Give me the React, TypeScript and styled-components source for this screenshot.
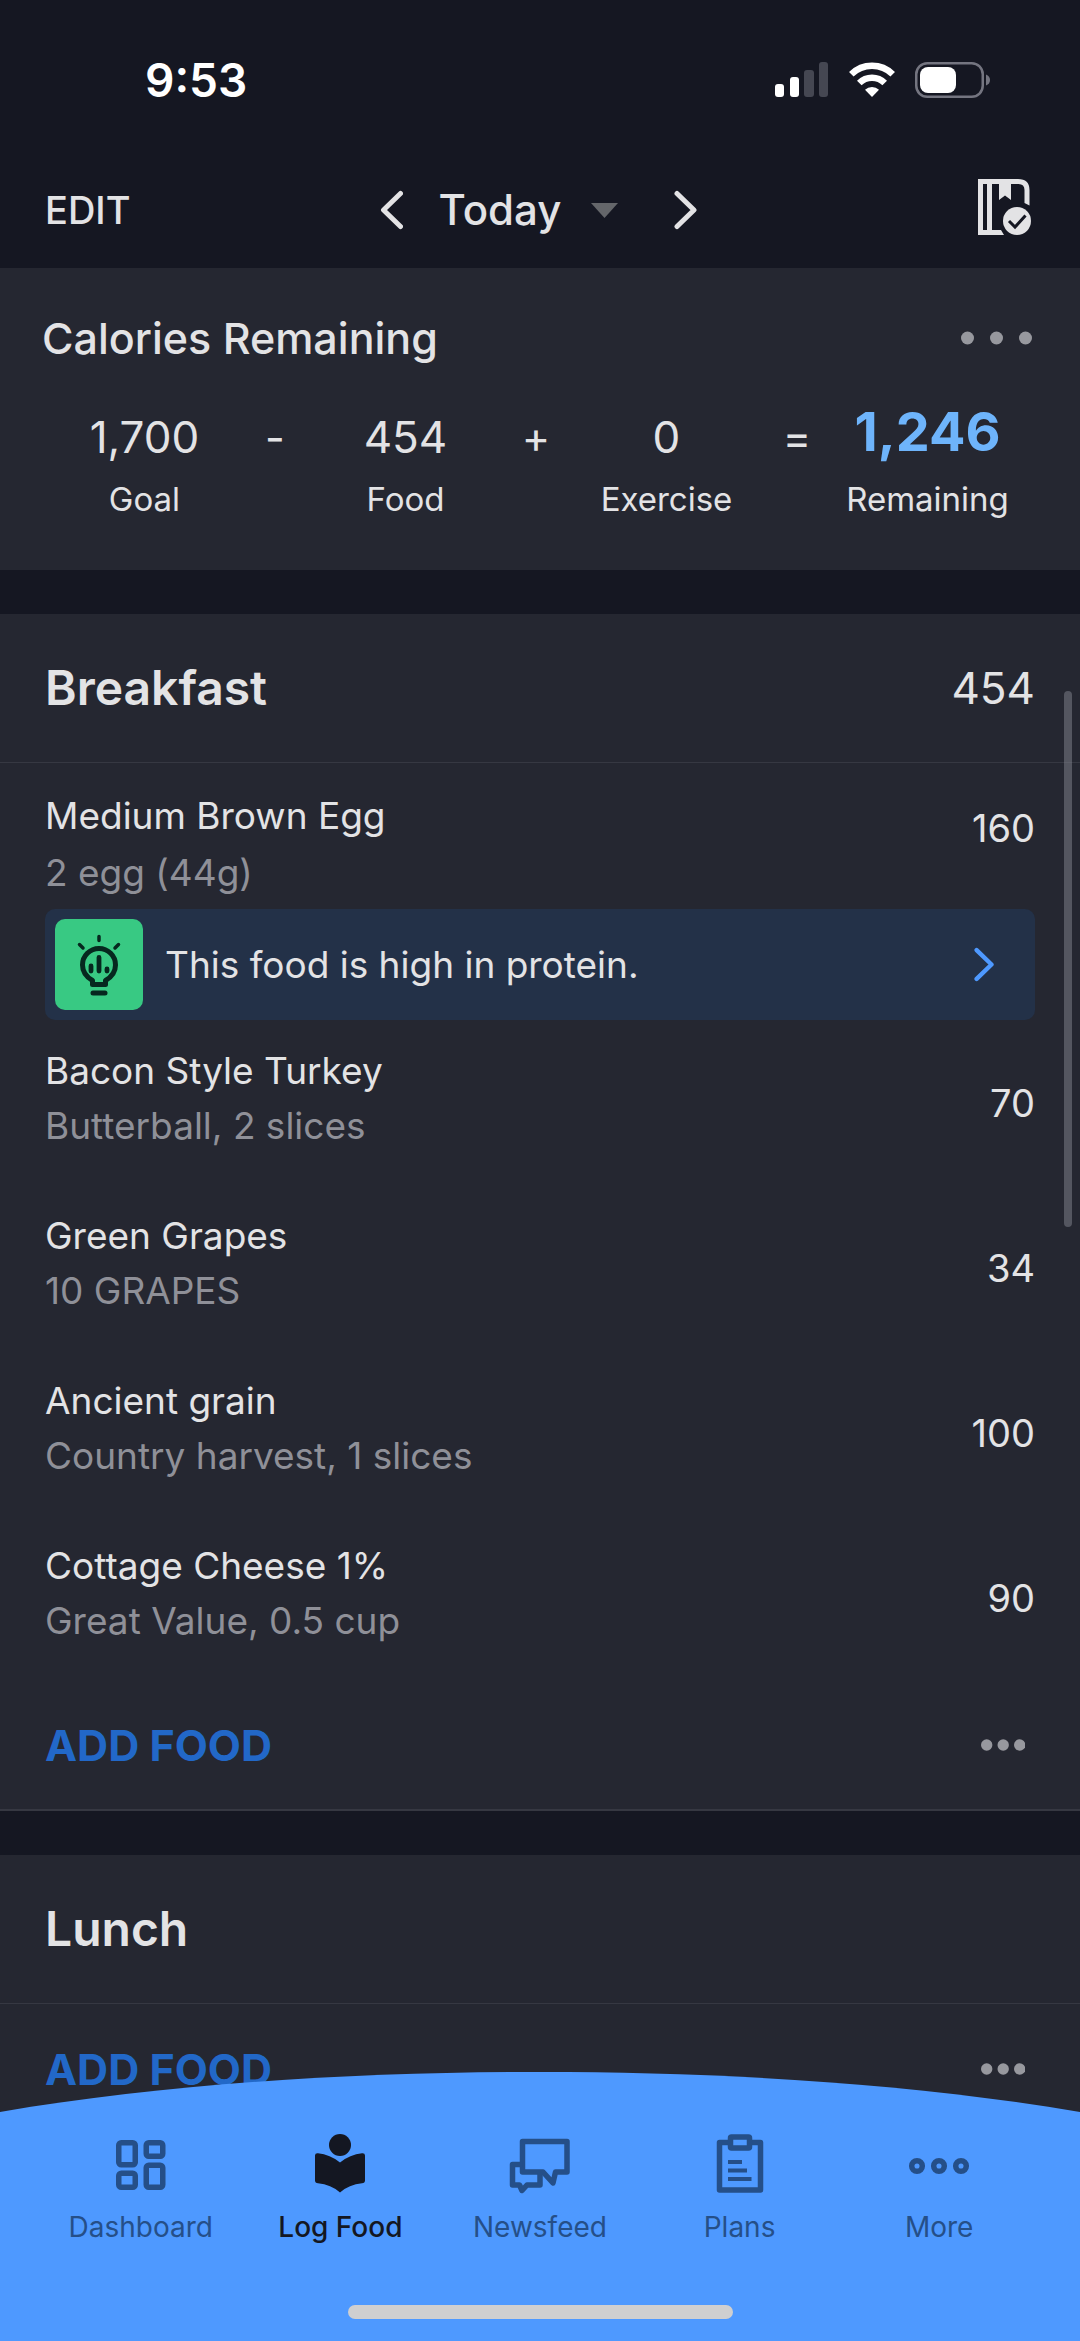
import React from "react";
import styled, { createGlobalStyle } from "styled-components";

const color = {
  page: "#151722",
  panel: "#252731",
  line: "#363842",
  text: "#e3e3e5",
  muted: "#8f9098",
  dots: "#97989e",
  action: "#2268c8",
  highlight: "#6eb4fb",
  nav: "#4e99ff",
  navIdle: "#254f88",
  navActive: "#141722",
  tip: "#233148",
  tipIcon: "#38c983",
};

const GlobalStyle = createGlobalStyle`
  *, *::before, *::after { box-sizing: border-box; }
  html, body { margin: 0; padding: 0; background: ${color.page}; }
  body { font-family: Inter, "Liberation Sans", sans-serif; color: ${color.text}; }
  h1, h2, p, ul, dl, dd, dt { margin: 0; padding: 0; font-weight: inherit; }
  ul { list-style: none; }
  svg { display: block; flex: none; }
`;

const Screen = styled.div`
  position: relative;
  display: flex;
  flex-direction: column;
  height: 100vh;
  overflow: hidden;
`;

const PlainButton = styled.button`
  display: flex;
  align-items: center;
  padding: 0;
  border: 0;
  background: none;
  color: inherit;
  font: inherit;
  cursor: pointer;
`;

const StatusBar = styled.div`
  display: flex;
  align-items: center;
  justify-content: space-between;
  flex: none;
  height: 160px;
  padding: 0 90px 0 145px;
`;

const Clock = styled.time`
  font-size: 46px;
  line-height: 56px;
  font-weight: 600;
  color: #fff;
`;

const StatusIcons = styled.div`
  display: flex;
  align-items: center;
  gap: 20px;
`;

const TopBar = styled.header`
  display: grid;
  grid-template-columns: 1fr auto 1fr;
  align-items: center;
  flex: none;
  height: 108px;
  padding: 0 48px 8px 45px;
`;

const EditButton = styled(PlainButton)`
  justify-self: start;
  font-size: 38px;
  line-height: 48px;
  font-weight: 500;
`;

const DayPicker = styled.div`
  display: flex;
  align-items: center;
  gap: 36px;
`;

const DayButton = styled(PlainButton)`
  gap: 30px;
  padding-right: 20px;
  font-size: 42px;
  line-height: 56px;
  font-weight: 500;
`;

const EndButton = styled(PlainButton)`
  justify-self: end;
  padding-bottom: 6px;
`;

const Diary = styled.main`
  position: relative;
  flex: 1;
  min-height: 0;
  overflow: hidden;
`;

const Summary = styled.section`
  height: 302px;
  padding: 42px 0 0;
  margin-bottom: 44px;
  background: ${color.panel};
`;

const SummaryHead = styled.div`
  display: flex;
  align-items: center;
  justify-content: space-between;
  height: 56px;
  padding: 0 48px 0 42px;
`;

const SummaryTitle = styled.h1`
  font-size: 43px;
  line-height: 56px;
  font-weight: 500;
`;

const Equation = styled.dl`
  display: grid;
  grid-template-columns: 1fr 56px 1fr 56px 1fr 56px 1fr;
  padding: 43px 50px 0 42px;
`;

const Term = styled.div`
  display: flex;
  flex-direction: column-reverse;
  align-items: center;
  gap: 10px;
`;

const TermLabel = styled.dt`
  font-size: 33px;
  line-height: 48px;
`;

const TermValue = styled.dd<{ $strong?: boolean }>`
  height: 56px;
  font-size: ${(p) => (p.$strong ? 54 : 44)}px;
  line-height: ${(p) => (p.$strong ? 46 : 56)}px;
  font-weight: ${(p) => (p.$strong ? 700 : 400)};
  color: ${(p) => (p.$strong ? color.highlight : color.text)};
`;

const Operator = styled.div`
  font-size: 43px;
  line-height: 56px;
  text-align: center;
`;

const Meal = styled.section`
  margin-bottom: 44px;
  background: ${color.panel};
  border-bottom: 2px solid ${color.line};
`;

const MealHead = styled.div`
  display: flex;
  align-items: center;
  justify-content: space-between;
  height: 149px;
  padding: 0 45px;
  border-bottom: 1px solid ${color.line};
`;

const MealName = styled.h2`
  font-size: 48px;
  line-height: 56px;
  font-weight: 600;
`;

const MealTotal = styled.span`
  font-size: 44px;
  line-height: 56px;
`;

const FoodItem = styled.li`
  display: flex;
  flex-direction: column;
  padding: 0 45px;
`;

const FoodLine = styled(PlainButton)<{ $withTip?: boolean }>`
  justify-content: space-between;
  width: 100%;
  height: ${(p) => (p.$withTip ? 146 : 165)}px;
  text-align: left;
`;

const FoodText = styled.span<{ $withTip?: boolean }>`
  display: flex;
  flex-direction: column;
  gap: ${(p) => (p.$withTip ? 2 : 0)}px;
  padding: ${(p) => (p.$withTip ? "16px 0 0" : "0 0 10px")};
`;

const FoodName = styled.span`
  font-size: 37px;
  line-height: 56px;
`;

const FoodDetail = styled.span`
  font-size: 37px;
  line-height: 54px;
  color: ${color.muted};
`;

const FoodCalories = styled.span<{ $withTip?: boolean }>`
  padding-bottom: ${(p) => (p.$withTip ? 16 : 0)}px;
  font-size: 38px;
  line-height: 56px;
`;

const Tip = styled(PlainButton)`
  width: 100%;
  height: 111px;
  padding: 0 40px 0 10px;
  border-radius: 10px;
  background: ${color.tip};
  text-align: left;
`;

const TipIcon = styled.span`
  display: flex;
  align-items: center;
  justify-content: center;
  width: 88px;
  height: 91px;
  border-radius: 10px;
  background: ${color.tipIcon};
`;

const TipText = styled.span`
  flex: 1;
  padding-left: 22px;
  font-size: 37px;
  line-height: 56px;
`;

const MealActions = styled.div`
  display: flex;
  align-items: center;
  justify-content: space-between;
  height: 129px;
  padding: 0 55px 0 45px;
`;

const AddFood = styled(PlainButton)`
  font-size: 43px;
  line-height: 56px;
  font-weight: 700;
  color: ${color.action};
`;

const ScrollThumb = styled.div`
  position: absolute;
  top: 423px;
  right: 8px;
  width: 8px;
  height: 536px;
  border-radius: 4px;
  background: rgba(132, 134, 144, 0.5);
`;

const BottomNav = styled.nav`
  position: absolute;
  left: 0;
  right: 0;
  bottom: 0;
`;

const NavCurve = styled.svg`
  width: 100%;
  height: 42px;
`;

const NavBody = styled.div`
  display: flex;
  flex-direction: column;
  align-items: center;
  height: 228px;
  padding-bottom: 22px;
  background: ${color.nav};
`;

const NavList = styled.ul`
  display: grid;
  grid-template-columns: repeat(5, 1fr);
  flex: 1;
  width: 100%;
  padding: 20px 41px 0;
`;

const NavLink = styled.a<{ $active?: boolean }>`
  display: flex;
  flex-direction: column;
  align-items: center;
  gap: 10px;
  font-size: 28px;
  line-height: 40px;
  font-weight: ${(p) => (p.$active ? 500 : 400)};
  color: ${(p) => (p.$active ? color.navActive : color.navIdle)};
  text-decoration: none;
`;

const HomeIndicator = styled.div`
  width: 385px;
  height: 14px;
  border-radius: 7px;
  background: #cfcfd0;
`;

const Signal = () => (
  <svg width="54" height="36" viewBox="0 0 54 36" fill="#fff" aria-hidden="true">
    <rect x="0" y="22" width="9" height="13" rx="3" />
    <rect x="15" y="15" width="9" height="20" rx="3" />
    <rect x="29" y="8" width="10" height="27" rx="3" fill="#454752" />
    <rect x="44" y="0" width="9" height="35" rx="3" fill="#454752" />
  </svg>
);

const Wifi = () => (
  <svg width="46" height="36" viewBox="0 0 46 36" aria-hidden="true">
    <g fill="none" stroke="#fff" strokeWidth="6.500">
      <path d="M2.300 12.200a29.500 29.500 0 0 1 41.400 0" />
      <path d="M10.300 21a18 18 0 0 1 25.400 0" />
    </g>
    <path d="M23 35l-7-7.200a10 10 0 0 1 14 0z" fill="#fff" />
  </svg>
);

const Battery = () => (
  <svg width="75" height="36" viewBox="0 0 75 36" aria-hidden="true">
    <rect x="1.250" y="1.250" width="66.500" height="33.500" rx="11" fill="none" stroke="#747580" strokeWidth="2.500" />
    <rect x="5" y="5" width="36" height="26" rx="8" fill="#fff" />
    <path d="M71 12.500q4 1.500 4 5.500t-4 5.500z" fill="#747580" />
  </svg>
);

const Chevron = ({ back, tint, size = 40 }: { back?: boolean; tint: string; size?: number }) => (
  <svg width={size * 0.6} height={size} viewBox="0 0 24 40" fill="none" stroke={tint} strokeWidth="5" strokeLinecap="round" strokeLinejoin="round" aria-hidden="true">
    <path d={back ? "M21.500 3.500L4.500 20l17 16.500" : "M3 3.500l17 16.500L3 36.500"} />
  </svg>
);

const Caret = () => (
  <svg width="27" height="15" viewBox="0 0 27 15" aria-hidden="true">
    <path d="M0 0h27L13.500 15z" fill="#64666a" />
  </svg>
);

const DiaryCheck = () => (
  <svg width="54" height="56" viewBox="0 0 54 56" fill={color.text} aria-hidden="true">
    <path fillRule="evenodd" d="M0 0h40q11.500 0 11.500 11v15.500l-5-2.500V11q0-6-6-6H33v16l-6-4.500-6 4.500V5h-7v46h9l3 5H0zM5 5v46h4V5z" />
    <circle cx="39" cy="42" r="14" />
    <path d="M31 42l6 6L47.500 36.500" fill="none" stroke={color.page} strokeWidth="3" />
  </svg>
);

const Dots = ({ wide }: { wide?: boolean }) => {
  const r = wide ? 6.5 : 5.7;
  const step = wide ? 29 : 16.5;
  const width = Math.round(step * 2 + r * 2);
  return (
    <svg width={width} height="14" viewBox={`0 0 ${width} 14`} fill={color.dots} aria-hidden="true">
      {[0, 1, 2].map((n) => (
        <circle key={n} cx={r + n * step} cy="7" r={r} />
      ))}
    </svg>
  );
};

const Bulb = () => (
  <svg width="46" height="62" viewBox="0 0 46 62" fill="none" stroke="#06281f" strokeWidth="5" strokeLinecap="round" aria-hidden="true">
    <path d="M23 2.500v4M3.500 10.500l3.500 3.500M42.500 10.500L39 14" strokeWidth="3.500" />
    <path d="M16.500 50.500v-4C10.500 43 6.500 37.500 6.500 31a16.500 16.500 0 0 1 33 0c0 6.500-4 12-10 15.500v4z" strokeLinejoin="round" />
    <path d="M15 32v5M23 23.500v13.500M31 35v2" strokeWidth="4.800" />
    <path d="M17 59h12" strokeWidth="5" />
  </svg>
);

const DashboardIcon = () => (
  <svg width="64" height="64" viewBox="0 0 64 64" fill="none" stroke="currentColor" strokeWidth="5.500" aria-hidden="true">
    <rect x="9.750" y="9.750" width="16.500" height="22" rx="2.500" />
    <rect x="37.250" y="9.750" width="16.500" height="13.500" rx="2.500" />
    <rect x="9.750" y="40.250" width="16.500" height="14" rx="2.500" />
    <rect x="37.250" y="32.250" width="16.500" height="22" rx="2.500" />
  </svg>
);

const ReaderIcon = () => (
  <svg width="64" height="64" viewBox="0 0 64 64" fill="currentColor" aria-hidden="true">
    <circle cx="32" cy="12" r="11" />
    <path d="M7 22.500q0-2.500 3-2.200Q22 21.500 32 29.500q10-8 22-9.200 3-.3 3 2.200v25q0 2.500-3 2.800Q41 51.500 32 59.500 23 51.500 10 50.300q-3-.3-3-2.800z" />
  </svg>
);

const ChatIcon = () => (
  <svg width="64" height="64" viewBox="0 0 64 64" fill="none" stroke="currentColor" strokeWidth="5.500" strokeLinejoin="round" aria-hidden="true">
    <path d="M14.500 8.500h44.500v30.500H47.500L45 50 35 39H14.500z" />
    <path d="M14.500 31.500H4.500V52h7l2.500 5.500L19 52h13V40" />
  </svg>
);

const ClipboardIcon = () => (
  <svg width="64" height="64" viewBox="0 0 64 64" fill="none" stroke="currentColor" strokeWidth="5.500" strokeLinejoin="round" aria-hidden="true">
    <path d="M21 9.500h-9.500v47.500h41V9.500H43" />
    <rect x="22.500" y="4" width="19" height="11" rx="1" />
    <path d="M20 29h14M20 37.500h19M20 46h23.500" strokeWidth="4" />
  </svg>
);

const MoreIcon = () => (
  <svg width="64" height="64" viewBox="0 0 64 64" fill="none" stroke="currentColor" strokeWidth="5.500" aria-hidden="true">
    <circle cx="10" cy="33" r="5.300" />
    <circle cx="32" cy="33" r="5.300" />
    <circle cx="54" cy="33" r="5.300" />
  </svg>
);

type Food = { name: string; detail: string; calories: number; tip?: string };

const breakfast: Food[] = [
  { name: "Medium Brown Egg", detail: "2 egg (44g)", calories: 160, tip: "This food is high in protein." },
  { name: "Bacon Style Turkey", detail: "Butterball, 2 slices", calories: 70 },
  { name: "Green Grapes", detail: "10 GRAPES", calories: 34 },
  { name: "Ancient grain", detail: "Country harvest, 1 slices", calories: 100 },
  { name: "Cottage Cheese 1%", detail: "Great Value, 0.5 cup", calories: 90 },
];

const tabs = [
  { label: "Dashboard", icon: <DashboardIcon /> },
  { label: "Log Food", icon: <ReaderIcon />, active: true },
  { label: "Newsfeed", icon: <ChatIcon /> },
  { label: "Plans", icon: <ClipboardIcon /> },
  { label: "More", icon: <MoreIcon /> },
];

const MealSection = ({ name, total, foods }: { name: string; total?: number; foods: Food[] }) => (
  <Meal>
    <MealHead>
      <MealName>{name}</MealName>
      {total !== undefined && <MealTotal>{total}</MealTotal>}
    </MealHead>
    <ul>
      {foods.map((food) => (
        <FoodItem key={food.name}>
          <FoodLine $withTip={!!food.tip}>
            <FoodText $withTip={!!food.tip}>
              <FoodName>{food.name}</FoodName>
              <FoodDetail>{food.detail}</FoodDetail>
            </FoodText>
            <FoodCalories $withTip={!!food.tip}>{food.calories}</FoodCalories>
          </FoodLine>
          {food.tip && (
            <Tip>
              <TipIcon>
                <Bulb />
              </TipIcon>
              <TipText>{food.tip}</TipText>
              <Chevron tint={color.nav} size={35} />
            </Tip>
          )}
        </FoodItem>
      ))}
    </ul>
    <MealActions>
      <AddFood>ADD FOOD</AddFood>
      <PlainButton aria-label={`${name} options`}>
        <Dots />
      </PlainButton>
    </MealActions>
  </Meal>
);

export default function App() {
  return (
    <>
      <GlobalStyle />
      <Screen>
        <StatusBar>
          <Clock>9:53</Clock>
          <StatusIcons>
            <Signal />
            <Wifi />
            <Battery />
          </StatusIcons>
        </StatusBar>
        <TopBar>
          <EditButton>EDIT</EditButton>
          <DayPicker>
            <PlainButton aria-label="Previous day">
              <Chevron back tint={color.text} />
            </PlainButton>
            <DayButton>
              Today
              <Caret />
            </DayButton>
            <PlainButton aria-label="Next day">
              <Chevron tint={color.text} />
            </PlainButton>
          </DayPicker>
          <EndButton aria-label="Complete diary">
            <DiaryCheck />
          </EndButton>
        </TopBar>
        <Diary>
          <Summary>
            <SummaryHead>
              <SummaryTitle>Calories Remaining</SummaryTitle>
              <PlainButton aria-label="Summary options">
                <Dots wide />
              </PlainButton>
            </SummaryHead>
            <Equation>
              <Term>
                <TermLabel>Goal</TermLabel>
                <TermValue>1,700</TermValue>
              </Term>
              <Operator>-</Operator>
              <Term>
                <TermLabel>Food</TermLabel>
                <TermValue>454</TermValue>
              </Term>
              <Operator>+</Operator>
              <Term>
                <TermLabel>Exercise</TermLabel>
                <TermValue>0</TermValue>
              </Term>
              <Operator>=</Operator>
              <Term>
                <TermLabel>Remaining</TermLabel>
                <TermValue $strong>1,246</TermValue>
              </Term>
            </Equation>
          </Summary>
          <MealSection name="Breakfast" total={454} foods={breakfast} />
          <MealSection name="Lunch" foods={[]} />
          <ScrollThumb />
        </Diary>
        <BottomNav aria-label="Main">
          <NavCurve viewBox="0 0 1080 42" preserveAspectRatio="none" aria-hidden="true">
            <path d="M0 42V41C170 12 360 1 540 1S910 12 1080 41V42z" fill={color.nav} />
          </NavCurve>
          <NavBody>
            <NavList>
              {tabs.map((tab) => (
                <li key={tab.label}>
                  <NavLink href="#" $active={tab.active} aria-current={tab.active ? "page" : undefined}>
                    {tab.icon}
                    {tab.label}
                  </NavLink>
                </li>
              ))}
            </NavList>
            <HomeIndicator />
          </NavBody>
        </BottomNav>
      </Screen>
    </>
  );
}
